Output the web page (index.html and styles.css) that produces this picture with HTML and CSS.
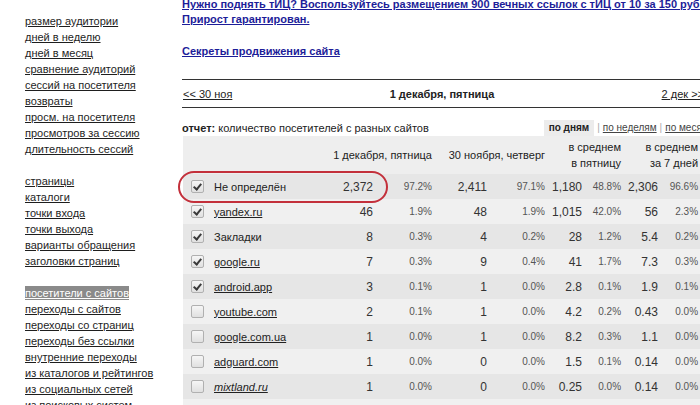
FILE: index.html
```html
<!DOCTYPE html>
<html lang="ru">
<head>
<meta charset="utf-8">
<title>Статистика</title>
<link rel="stylesheet" href="styles.css">
</head>
<body>
<div class="page">
  <nav class="side">
    <ul class="menu">
      <li><a href="#">размер аудитории</a></li>
      <li><a href="#">дней в неделю</a></li>
      <li><a href="#">дней в месяц</a></li>
      <li><a href="#">сравнение аудиторий</a></li>
      <li><a href="#">сессий на посетителя</a></li>
      <li><a href="#">возвраты</a></li>
      <li><a href="#">просм. на посетителя</a></li>
      <li><a href="#">просмотров за сессию</a></li>
      <li><a href="#">длительность сессий</a></li>
    </ul>
    <ul class="menu">
      <li><a href="#">страницы</a></li>
      <li><a href="#">каталоги</a></li>
      <li><a href="#">точки входа</a></li>
      <li><a href="#">точки выхода</a></li>
      <li><a href="#">варианты обращения</a></li>
      <li><a href="#">заголовки страниц</a></li>
    </ul>
    <ul class="menu">
      <li><a href="#" class="active">посетители с сайтов</a></li>
      <li><a href="#">переходы с сайтов</a></li>
      <li><a href="#">переходы со страниц</a></li>
      <li><a href="#">переходы без ссылки</a></li>
      <li><a href="#">внутренние переходы</a></li>
      <li><a href="#">из каталогов и рейтингов</a></li>
      <li><a href="#">из социальных сетей</a></li>
      <li><a href="#">из поисковых систем</a></li>
    </ul>
  </nav>
  <main class="main">
    <p class="promo"><a href="#">Нужно поднять тИЦ? Воспользуйтесь размещением 900 вечных ссылок с тИЦ от 10 за 150 руб. Прирост гарантирован.</a></p>
    <p class="promo promo-2"><a href="#">Секреты продвижения сайта</a></p>

    <div class="daynav">
      <a href="#" class="prev">&lt;&lt; 30 ноя</a>
      <b class="cur">1 декабря, пятница</b>
      <a href="#" class="next">2 дек &gt;&gt;</a>
    </div>

    <div class="report">
      <div class="report-title"><b>отчет:</b> количество посетителей с разных сайтов</div>
      <div class="periods"><b class="on">по дням</b><span class="sep">|</span><a href="#">по неделям</a><span class="sep">|</span><a href="#">по месяцам</a></div>
    </div>

    <div class="tablewrap">
      <table class="stats">
        <colgroup>
          <col class="w-chk"><col class="w-name"><col class="w-a"><col class="w-b"><col class="w-c"><col class="w-d"><col class="w-e"><col class="w-f"><col class="w-g"><col class="w-h">
        </colgroup>
        <thead>
          <tr>
            <th colspan="2"></th>
            <th colspan="2">1 декабря, пятница</th>
            <th colspan="2">30 ноября, четверг</th>
            <th colspan="2">в среднем<br>в пятницу</th>
            <th colspan="2">в среднем<br>за 7 дней</th>
          </tr>
        </thead>
        <tbody>
          <tr><td class="chk"><span class="cb on"></span></td><td class="name">Не определён</td><td class="n">2,372</td><td class="p">97.2%</td><td class="n">2,411</td><td class="p">97.1%</td><td class="n">1,180</td><td class="p">48.8%</td><td class="n">2,306</td><td class="p">96.6%</td></tr>
          <tr><td class="chk"><span class="cb on"></span></td><td class="name"><a href="#">yandex.ru</a></td><td class="n">46</td><td class="p">1.9%</td><td class="n">48</td><td class="p">1.9%</td><td class="n">1,015</td><td class="p">42.0%</td><td class="n">56</td><td class="p">2.3%</td></tr>
          <tr><td class="chk"><span class="cb on"></span></td><td class="name">Закладки</td><td class="n">8</td><td class="p">0.3%</td><td class="n">4</td><td class="p">0.2%</td><td class="n">28</td><td class="p">1.2%</td><td class="n">5.4</td><td class="p">0.2%</td></tr>
          <tr><td class="chk"><span class="cb on"></span></td><td class="name"><a href="#">google.ru</a></td><td class="n">7</td><td class="p">0.3%</td><td class="n">9</td><td class="p">0.4%</td><td class="n">41</td><td class="p">1.7%</td><td class="n">7.3</td><td class="p">0.3%</td></tr>
          <tr><td class="chk"><span class="cb on"></span></td><td class="name"><a href="#">android.app</a></td><td class="n">3</td><td class="p">0.1%</td><td class="n">1</td><td class="p">0.0%</td><td class="n">2.8</td><td class="p">0.1%</td><td class="n">1.9</td><td class="p">0.1%</td></tr>
          <tr><td class="chk"><span class="cb"></span></td><td class="name"><a href="#">youtube.com</a></td><td class="n">2</td><td class="p">0.1%</td><td class="n">1</td><td class="p">0.0%</td><td class="n">4.2</td><td class="p">0.2%</td><td class="n">0.43</td><td class="p">0.0%</td></tr>
          <tr><td class="chk"><span class="cb"></span></td><td class="name"><a href="#">google.com.ua</a></td><td class="n">1</td><td class="p">0.0%</td><td class="n">1</td><td class="p">0.0%</td><td class="n">8.2</td><td class="p">0.3%</td><td class="n">1.1</td><td class="p">0.0%</td></tr>
          <tr><td class="chk"><span class="cb"></span></td><td class="name"><a href="#">adguard.com</a></td><td class="n">1</td><td class="p">0.0%</td><td class="n">0</td><td class="p">0.0%</td><td class="n">1.5</td><td class="p">0.1%</td><td class="n">0.14</td><td class="p">0.0%</td></tr>
          <tr><td class="chk"><span class="cb"></span></td><td class="name"><a href="#" class="it">mixtland.ru</a></td><td class="n">1</td><td class="p">0.0%</td><td class="n">0</td><td class="p">0.0%</td><td class="n">0.25</td><td class="p">0.0%</td><td class="n">0.14</td><td class="p">0.0%</td></tr>
          <tr><td class="chk"></td><td class="name"></td><td class="n"></td><td class="p"></td><td class="n"></td><td class="p"></td><td class="n"></td><td class="p"></td><td class="n"></td><td class="p"></td></tr>
        </tbody>
      </table>
      <div class="mark" aria-hidden="true"></div>
    </div>
  </main>
</div>
</body>
</html>
```
FILE: styles.css
```css
html, body {
  margin: 0;
  padding: 0;
  background: #fff;
}
body {
  width: 700px;
  height: 405px;
  overflow: hidden;
  font-family: "Liberation Sans", Arial, sans-serif;
  font-size: 11px;
  color: #222;
}
a { color: #222; }

.page {
  display: flex;
  align-items: flex-start;
}

.side {
  width: 157px;
  flex: none;
  padding: 13px 0 0 25px;
}
.menu {
  list-style: none;
  margin: 0 0 16px;
  padding: 0;
}
.menu li {
  line-height: 16px;
  height: 16px;
  white-space: nowrap;
}
.menu a {
  color: #1e1e1e;
  text-decoration: underline;
}
.menu a.active {
  background: #8a8a8a;
  color: #fff;
  padding: 1px 0 1px;
}

.main {
  width: 520px;
  flex: none;
  margin-top: -3px;
}
.promo {
  margin: 0;
  font-weight: bold;
  font-size: 11px;
  line-height: 15px;
  width: 560px;
}
.promo a { color: #1d1d99; }
.promo-2 { margin-top: 17px; }

.daynav {
  margin-top: 20px;
  border-top: 1px solid #333;
  border-bottom: 1px solid #333;
  height: 27px;
  display: grid;
  grid-template-columns: 1fr auto 1fr;
  align-items: center;
  white-space: nowrap;
}
.daynav .prev { justify-self: start; padding-left: 1px; }
.daynav .cur { justify-self: center; font-weight: bold; color: #222; }
.daynav .next { justify-self: end; margin-right: -2px; }

.report {
  margin-top: 12px;
  height: 16px;
  line-height: 16px;
  display: flex;
  justify-content: space-between;
  white-space: nowrap;
}
.report-title b { font-weight: bold; }
.periods {
  font-size: 10px;
  color: #444;
  margin-right: -18px;
}
.periods .on {
  background: #ececec;
  padding: 2px 5px 3px;
  color: #222;
}
.periods .sep {
  color: #aaa;
  margin: 0 3px;
}
.periods a { color: #444; }

.tablewrap {
  position: relative;
  margin-left: 1px;
}
.stats {
  border-collapse: collapse;
  table-layout: fixed;
  width: 519px;
}
.w-chk { width: 25px; }
.w-name { width: 122px; }
.w-a { width: 47px; }
.w-b { width: 59px; }
.w-c { width: 55px; }
.w-d { width: 58px; }
.w-e { width: 37px; }
.w-f { width: 39px; }
.w-g { width: 37px; }
.w-h { width: 40px; }

.stats thead tr { background: #eeeeee; height: 38px; }
.stats th {
  font-weight: normal;
  text-align: right;
  padding: 0 4px 0 0;
  line-height: 16px;
  color: #222;
  white-space: nowrap;
  vertical-align: middle;
}
.stats tbody tr { height: 25px; }
.stats tbody tr:nth-child(odd) { background: #e6e6e6; }
.stats tbody tr:nth-child(even) { background: #f0f0f0; }
.stats td {
  padding: 0;
  vertical-align: middle;
  white-space: nowrap;
}
.stats td.chk { padding-left: 8px; }
.stats td.name { padding-left: 6px; color: #222; }
.stats td.name a { color: #222; }
.stats td.name a.it { font-style: italic; }
.stats td.n {
  text-align: right;
  padding-right: 4px;
  font-size: 12px;
  color: #333;
}
.stats td.p {
  text-align: right;
  padding-right: 4px;
  font-size: 10px;
  color: #555;
}

.cb {
  display: block;
  width: 11px;
  height: 11px;
  border: 1px solid #b0b0b0;
  border-radius: 2px;
  background: linear-gradient(#f6f6f6, #e0e0e0);
  position: relative;
}
.cb.on::after {
  content: "";
  position: absolute;
  left: 3px;
  top: 1px;
  width: 3px;
  height: 6px;
  border: solid #3a3a3a;
  border-width: 0 2px 2px 0;
  transform: rotate(40deg);
}

.mark {
  position: absolute;
  left: -5px;
  top: 35px;
  width: 206px;
  height: 28px;
  border: 2.5px solid #c3303b;
  border-radius: 16px;
  pointer-events: none;
}
```
